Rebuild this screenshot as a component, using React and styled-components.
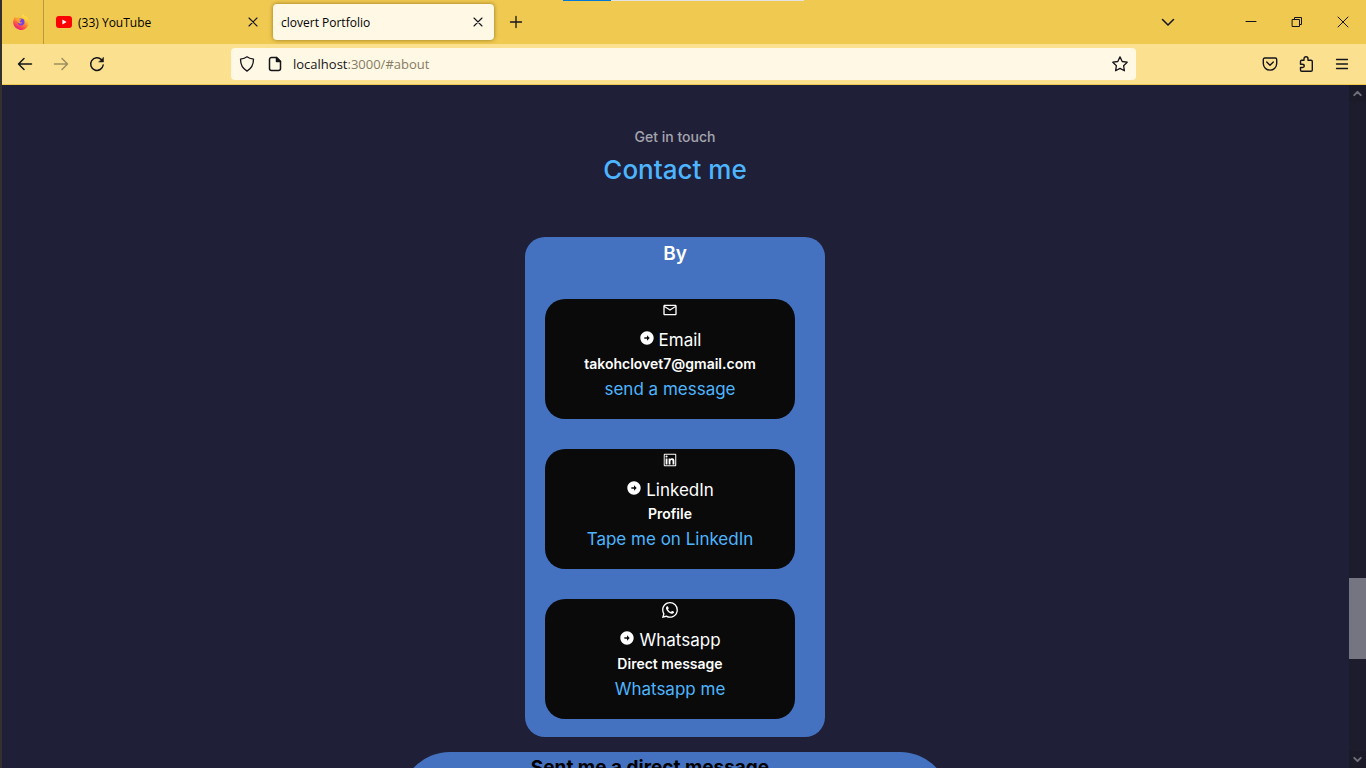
import React from "react";
import styled, { createGlobalStyle } from "styled-components";
import { MdOutlineEmail } from "react-icons/md";
import { RiArrowRightCircleFill } from "react-icons/ri";
import { AiOutlineLinkedin } from "react-icons/ai";
import { BsWhatsapp } from "react-icons/bs";

const GlobalStyle = createGlobalStyle`
  *, *::before, *::after { box-sizing: border-box; }
  body { margin: 0; background: #1f1f38; }
  button { border: 0; padding: 0; background: none; color: inherit; font: inherit; }
  h2, h3, h4, h5, p { margin: 0; }
`;

const Window = styled.div`
  display: flex;
  flex-direction: column;
  height: 100vh;
  overflow: hidden;
  border-left: 2px solid #33302f;
  font-family: "Open Sans", "Noto Sans", sans-serif;
  color: #15141a;
`;

const TabStrip = styled.header`
  position: relative;
  display: flex;
  align-items: center;
  flex: none;
  height: 44px;
  background: #f0c950;
`;

const LoadProgress = styled.div`
  position: absolute;
  top: 0;
  left: 50%;
  width: 241px;
  height: 1px;
  margin-left: -121px;
  background: linear-gradient(to right, #0078d7 20%, #e3e3e3 20%);
`;

const PinnedTab = styled.button`
  display: grid;
  place-items: center;
  width: 42px;
  height: 44px;
  padding-right: 4px;
  border-right: 1px solid #b8983a;
`;

const Tab = styled.div`
  display: flex;
  align-items: center;
  width: ${(p) => (p.$active ? 221 : 229)}px;
  height: 36px;
  padding-right: 8px;
  border-radius: 4px;
  background: ${(p) => (p.$active ? "#fff8e5" : "transparent")};
  box-shadow: ${(p) => (p.$active ? "0 0 4px rgba(90, 65, 0, 0.6)" : "none")};
`;

const TabLabel = styled.button`
  display: flex;
  flex: 1;
  align-items: center;
  gap: 6px;
  height: 36px;
  padding-left: ${(p) => (p.$icon ? 12 : 8)}px;
  font-size: 12px;
  white-space: nowrap;
  color: #000;
`;

const IconButton = styled.button`
  display: grid;
  place-items: center;
  flex: none;
  width: ${(p) => p.$size || 36}px;
  height: ${(p) => Math.min(p.$size || 36, 36)}px;
  opacity: ${(p) => (p.disabled ? 0.4 : 1)};
  color: #15141a;
`;

const NewTab = styled(IconButton)`
  margin-left: 4px;
`;

const WindowControls = styled.div`
  display: flex;
  align-items: center;
  margin-left: auto;
`;

const TabList = styled(IconButton)`
  margin-right: 42px;
`;

const NavBar = styled.nav`
  display: flex;
  align-items: center;
  flex: none;
  height: 41px;
  padding: 0 6px 0 5px;
  background: #fbe18f;
  border-bottom: 1px solid #f0c950;
`;

const Spacer = styled.div`
  flex: 116 0 0;
`;

const AddressBar = styled.div`
  display: flex;
  align-items: center;
  flex: 905 0 0;
  height: 32px;
  border-radius: 4px;
  background: #fff8e5;
  font-size: 13px;
`;

const AddressIcons = styled.div`
  display: flex;
  align-items: center;
  gap: 12px;
  padding: 0 10px 0 8px;
`;

const Host = styled.label`
  color: #15141a;
`;

const AddressInput = styled.input`
  flex: 1;
  min-width: 0;
  padding: 0;
  border: 0;
  outline: 0;
  background: none;
  font: inherit;
  color: #857c64;
`;

const Viewport = styled.div`
  display: flex;
  flex: 1;
  min-height: 0;
`;

const Page = styled.main`
  display: flex;
  flex-direction: column;
  align-items: center;
  flex: 1;
  overflow: hidden;
  padding: 40px 1px 0 0;
  background: #1f1f38;
  color: #fff;
  font-family: Inter, sans-serif;
  text-align: center;
`;

const Kicker = styled.h5`
  font-size: 14px;
  line-height: 24px;
  font-weight: 500;
  color: rgba(255, 255, 255, 0.6);
`;

const SectionTitle = styled.h2`
  margin-bottom: 46px;
  font-size: 26px;
  line-height: 42px;
  font-weight: 500;
  color: #4db5ff;
`;

const Options = styled.section`
  display: flex;
  flex-direction: column;
  flex: none;
  gap: 28px;
  width: 300px;
  margin-bottom: 15px;
  padding: 0 30px 18px 20px;
  border-radius: 20px;
  background: #4472c0;
`;

const OptionsTitle = styled.h3`
  margin-right: -10px;
  font-size: 19px;
  line-height: 34px;
  font-weight: 600;
`;

const OptionList = styled.div`
  display: grid;
  gap: 30px;
`;

const Option = styled.article`
  height: 120px;
  border-radius: 20px;
  background: #0a0a0a;
  line-height: 24px;
`;

const OptionIcon = styled.div`
  display: grid;
  place-items: center;
  height: 22px;
  margin-bottom: 7px;
  font-size: 16px;
`;

const OptionTitle = styled.h4`
  font-size: 17px;
  font-weight: 400;

  svg {
    width: 16px;
    height: 16px;
    margin-right: 4px;
  }
`;

const OptionDetail = styled.h5`
  font-size: 14px;
  font-weight: 600;
`;

const OptionLink = styled.a`
  display: block;
  font-size: 17px;
  line-height: 26px;
  color: #4db5ff;
  text-decoration: none;
`;

const MessageForm = styled.form`
  flex: none;
  width: 550px;
  height: 400px;
  padding-right: 50px;
  border-radius: 50px;
  background: #4472c0;
`;

const FormTitle = styled.h3`
  font-size: 19px;
  line-height: 32px;
  font-weight: 700;
  color: #000;
`;

const Scrollbar = styled.div`
  display: flex;
  flex-direction: column;
  flex: none;
  width: 17px;
  background: #1c1c2c;
`;

const ScrollArrow = styled.button`
  display: grid;
  place-items: center;
  height: 17px;
  background: #1a1a29;
  color: #6f6f79;
`;

const Track = styled.div`
  flex: ${(p) => p.$share} 0 0;
`;

const Thumb = styled(Track)`
  background: #757581;
`;

const Line = ({ children, size = 16, width = 1.3 }) => (
  <svg width={size} height={size} viewBox="0 0 16 16" fill="none" stroke="currentColor" strokeWidth={width} strokeLinecap="round" strokeLinejoin="round" aria-hidden="true">
    {children}
  </svg>
);

const CloseIcon = () => (
  <Line width={1.1}><path d="M4 4l8 8M12 4l-8 8" /></Line>
);

const FirefoxIcon = () => (
  <svg width="16" height="16" viewBox="0 0 16 16" aria-hidden="true">
    <defs>
      <linearGradient id="flame" x1="0.85" y1="0" x2="0.3" y2="1">
        <stop offset="0" stopColor="#fff44f" />
        <stop offset="0.35" stopColor="#ffc233" />
        <stop offset="0.6" stopColor="#ff7a35" />
        <stop offset="0.8" stopColor="#ff4055" />
        <stop offset="1" stopColor="#e31587" />
      </linearGradient>
    </defs>
    <path fill="url(#flame)" d="M10.300 0c.1 1.400 1 2.200 1.900 3 .3-.2.4-.6.4-1 1.900 1.300 3.200 3.800 3.200 6.200A7.800 7.800 0 1 1 .9 5c.1-1 .5-1.900 1-2.500.2.5.4 1 .8 1.300.6-.2 1.200-.2 1.800-.1.700-.9 1.500-1.200 2.300-1.300-.6.5-.9 1-.8 1.400.9-.6 1.800-.8 2.700-.6C8.700 2.200 9.200.8 10.300 0z" />
    <circle cx="8.100" cy="8" r="3.400" fill="#7542e5" />
    <path fill="#ffa52d" d="M2.200 5.100c1.400-1 3.200-.8 4.200.1.8.1 1.600 0 2 .3-.1.900-1.600 1.100-1.800 1.800.1 1.200 1.500 1.500 2.700.9-.8 1.900-4.100 1.600-4.900-.6-.6-.9-1.200-1.600-2.200-2.500z" />
  </svg>
);

const YouTubeIcon = () => (
  <svg width="16" height="16" viewBox="0 0 16 16" aria-hidden="true">
    <rect y="2" width="16" height="12" rx="3" fill="#f00" />
    <path d="M6.400 5.500v5L10.600 8z" fill="#fff" />
  </svg>
);

const contacts = [
  { icon: <MdOutlineEmail />, title: "Email", detail: "takohclovet7@gmail.com", link: "send a message", href: "mailto:takohclovet7@gmail.com" },
  { icon: <AiOutlineLinkedin />, title: "LinkedIn", detail: "Profile", link: "Tape me on LinkedIn", href: "#linkedin" },
  { icon: <BsWhatsapp />, title: "Whatsapp", detail: "Direct message", link: "Whatsapp me", href: "#whatsapp" },
];

export default function App() {
  return (
    <>
      <GlobalStyle />
      <Window>
        <TabStrip>
          <LoadProgress />
          <PinnedTab aria-label="Firefox View"><FirefoxIcon /></PinnedTab>
          <Tab>
            <TabLabel $icon><YouTubeIcon />(33) YouTube</TabLabel>
            <IconButton $size={24} aria-label="Close YouTube tab"><CloseIcon /></IconButton>
          </Tab>
          <Tab $active>
            <TabLabel>clovert Portfolio</TabLabel>
            <IconButton $size={16} aria-label="Close tab"><CloseIcon /></IconButton>
          </Tab>
          <NewTab aria-label="New tab">
            <Line><path d="M8 2.500v11M2.500 8h11" /></Line>
          </NewTab>
          <WindowControls>
            <TabList aria-label="List all tabs">
              <Line width={1.500}><path d="M2.500 5.500L8 11l5.500-5.500" /></Line>
            </TabList>
            <IconButton $size={46} aria-label="Minimize">
              <Line width={1}><path d="M3 7.500h10" /></Line>
            </IconButton>
            <IconButton $size={46} aria-label="Restore">
              <Line width={1}><path d="M3.500 5.500h7v7h-7zM5.500 5.500v-2h7v7h-2" /></Line>
            </IconButton>
            <IconButton $size={46} aria-label="Close window">
              <Line width={1}><path d="M3 3l10 10M13 3L3 13" /></Line>
            </IconButton>
          </WindowControls>
        </TabStrip>

        <NavBar>
          <IconButton aria-label="Back">
            <Line width={1.500}><path d="M1.500 8h13M7 2.500L1.500 8 7 13.500" /></Line>
          </IconButton>
          <IconButton disabled aria-label="Forward">
            <Line width={1.500}><path d="M14.500 8h-13M9 2.500L14.500 8 9 13.500" /></Line>
          </IconButton>
          <IconButton aria-label="Reload">
            <Line width={1.500}>
              <path d="M14.200 9A6.300 6.300 0 1 1 12.500 3.700" />
              <path d="M14.500 1.500v4.500H10z" fill="currentColor" strokeWidth="0.5" />
            </Line>
          </IconButton>
          <Spacer />
          <AddressBar>
            <AddressIcons>
              <Line><path d="M8 .8c2 1.600 4 2 6.500 2.300 0 5-1.500 9.300-6.500 12-5-2.700-6.500-7-6.500-12C4 2.800 6 2.400 8 .8z" /></Line>
              <Line width={1.500}>
                <path d="M9.500 1.500h-5a2 2 0 0 0-2 2v9a2 2 0 0 0 2 2h7a2 2 0 0 0 2-2V5.500z" />
                <path d="M9.500 1.500v4h4z" fill="currentColor" />
              </Line>
            </AddressIcons>
            <Host htmlFor="address">localhost</Host>
            <AddressInput id="address" defaultValue=":3000/#about" />
            <IconButton $size={32} aria-label="Bookmark this page">
              <Line><path d="M8 .9l2.200 4.600 5 .7-3.600 3.500.8 5.100L8 12.400l-4.400 2.400.8-5.100L.8 6.200l5-.7z" /></Line>
            </IconButton>
          </AddressBar>
          <Spacer />
          <IconButton aria-label="Save to Pocket">
            <Line width={1.400}><path d="M2.700 2h10.600c.8 0 1.400.6 1.400 1.400v4a6.700 6.700 0 0 1-13.400 0v-4C1.300 2.600 1.900 2 2.700 2zM4.700 6L8 9.200 11.300 6" /></Line>
          </IconButton>
          <IconButton aria-label="Extensions">
            <Line width={1.400}><path d="M2.500 5.500c0-.8.500-1.200 1.200-1.200H6V2.800C6 1.500 6.800.7 8 .7s2 .8 2 2.100v1.500h3c.8 0 1.300.5 1.300 1.300v8.300c0 .8-.5 1.300-1.300 1.300H3.700c-.7 0-1.200-.5-1.200-1.300V11.500h1.800c1.200 0 1.900-.6 1.900-1.600s-.7-1.600-1.900-1.600H2.500z" /></Line>
          </IconButton>
          <IconButton aria-label="Open menu">
            <Line><path d="M2.500 3.500h11M2.500 8h11M2.500 12.500h11" /></Line>
          </IconButton>
        </NavBar>

        <Viewport>
          <Page>
            <Kicker>Get in touch</Kicker>
            <SectionTitle>Contact me</SectionTitle>
            <Options>
              <OptionsTitle>By</OptionsTitle>
              <OptionList>
                {contacts.map((c) => (
                  <Option key={c.title}>
                    <OptionIcon>{c.icon}</OptionIcon>
                    <OptionTitle><RiArrowRightCircleFill />{c.title}</OptionTitle>
                    <OptionDetail>{c.detail}</OptionDetail>
                    <OptionLink href={c.href}>{c.link}</OptionLink>
                  </Option>
                ))}
              </OptionList>
            </Options>
            <MessageForm>
              <FormTitle>Sent me a direct message</FormTitle>
            </MessageForm>
          </Page>
          <Scrollbar>
            <ScrollArrow aria-label="Scroll up">
              <Line size={13} width={2.500}><path d="M4 10l4-4 4 4" /></Line>
            </ScrollArrow>
            <Track $share={476} />
            <Thumb $share={81} />
            <Track $share={92} />
            <ScrollArrow aria-label="Scroll down">
              <Line size={13} width={2.500}><path d="M4 6l4 4 4-4" /></Line>
            </ScrollArrow>
          </Scrollbar>
        </Viewport>
      </Window>
    </>
  );
}
